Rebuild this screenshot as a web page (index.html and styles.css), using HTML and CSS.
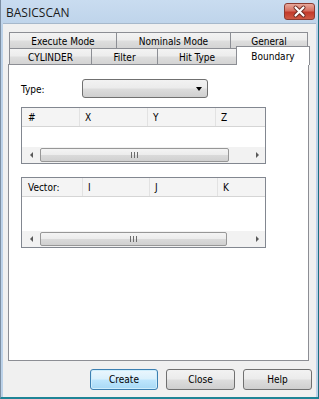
FILE: index.html
```html
<!DOCTYPE html>
<html lang="en">
<head>
    <meta charset="UTF-8">
    <title>BASICSCAN</title>
    <link rel="stylesheet" href="styles.css">
</head>
<body>
<div class="window">
    <div class="titlebar">
        <span class="title">BASICSCAN</span>
        <span class="close">
            <svg width="31" height="17" viewBox="0 0 31 17">
                <path d="M11.5 4.5 L19.5 12.5 M19.5 4.5 L11.5 12.5" stroke="#6b2a22" stroke-width="4" stroke-linecap="round"/>
                <path d="M11.5 4.5 L19.5 12.5 M19.5 4.5 L11.5 12.5" stroke="#ffffff" stroke-width="2.2" stroke-linecap="round"/>
            </svg>
        </span>
    </div>
    <div class="client">
        <div class="tabs">
            <div class="tabrow">
                <div class="tab t-exec">Execute Mode</div>
                <div class="tab t-nom">Nominals Mode</div>
                <div class="tab t-gen">General</div>
            </div>
            <div class="tabrow">
                <div class="tab t-cyl">CYLINDER</div>
                <div class="tab t-fil">Filter</div>
                <div class="tab t-hit">Hit Type</div>
                <div class="tab t-bnd selected">Boundary</div>
            </div>
        </div>
        <div class="panel">
            <div class="type-row">
                <span class="label">Type:</span>
                <div class="combo"><span class="combo-arrow"></span></div>
            </div>

            <div class="grid grid-pts">
                <div class="grid-head">
                    <span class="col c1">#</span>
                    <span class="col c2">X</span>
                    <span class="col c3">Y</span>
                    <span class="col c4">Z</span>
                </div>
                <div class="grid-body"></div>
                <div class="hscroll">
                    <span class="sb-left"><i class="arr-left"></i></span>
                    <div class="sb-track"><div class="thumb"><i class="grip"></i><i class="grip"></i><i class="grip"></i></div></div>
                    <span class="sb-right"><i class="arr-right"></i></span>
                </div>
            </div>

            <div class="grid grid-vec">
                <div class="grid-head">
                    <span class="col c1">Vector:</span>
                    <span class="col c2">I</span>
                    <span class="col c3">J</span>
                    <span class="col c4">K</span>
                </div>
                <div class="grid-body"></div>
                <div class="hscroll">
                    <span class="sb-left"><i class="arr-left"></i></span>
                    <div class="sb-track"><div class="thumb"><i class="grip"></i><i class="grip"></i><i class="grip"></i></div></div>
                    <span class="sb-right"><i class="arr-right"></i></span>
                </div>
            </div>
        </div>
        <div class="buttons">
            <div class="btn default">Create</div>
            <div class="btn">Close</div>
            <div class="btn">Help</div>
        </div>
    </div>
</div>
</body>
</html>
```

FILE: styles.css
```css
* {
    margin: 0;
    padding: 0;
    box-sizing: border-box;
}

body {
    background-color: #bcd3ea;
    font-family: "DejaVu Sans Condensed", "DejaVu Sans", sans-serif;
    font-stretch: condensed;
    font-size: 10px;
    color: #000;
}

.window {
    width: 319px;
    height: 399px;
    display: flex;
    flex-direction: column;
    border-left: 1px solid #7d8fa3;
    border-right: 1px solid #1d6f80;
    border-bottom: 2px solid #1f8496;
    background: linear-gradient(#c9dcf0, #bcd2e9 30px);
}

.titlebar {
    height: 23px;
    display: flex;
    justify-content: space-between;
    align-items: flex-start;
    padding: 0 3px 0 5px;
}

.title {
    font-family: "Open Sans", sans-serif;
    font-stretch: normal;
    font-size: 12px;
    line-height: 12px;
    margin-top: 7px;
    color: #1a1a1a;
}

.close {
    width: 31px;
    height: 17px;
    margin-top: 3px;
    border: 1px solid #8b3b31;
    border-radius: 3px;
    background: linear-gradient(#e8a99c, #d66f60 45%, #c23a2b 55%, #cf5a45);
    display: flex;
}

.close svg {
    margin: -1px;
}

.client {
    flex: 1;
    margin: 0 2px;
    background-color: #f0f0f0;
    border-top: 1px solid #a6b8cb;
    padding: 8px 7px 0 5px;
    display: flex;
    flex-direction: column;
}

.tabs {
    margin-left: 1px;
}

.tabrow {
    display: flex;
    height: 16px;
}

.tab {
    height: 16px;
    margin-right: -1px;
    border: 1px solid #8c8e94;
    border-bottom: none;
    background: linear-gradient(#f3f3f3, #ececec 48%, #dedede 52%, #d4d4d4);
    text-align: center;
    padding-top: 2px;
    line-height: 13px;
}

.t-exec { width: 108px; }
.t-nom { width: 115px; }
.t-gen { width: 78px; }
.t-cyl { width: 83px; }
.t-fil { width: 67px; }
.t-hit { width: 80px; }
.t-bnd { width: 74px; }

.tab.selected {
    height: 19px;
    margin-top: -2px;
    background: #fff;
    position: relative;
    z-index: 1;
    padding-top: 3px;
}

.panel {
    height: 297px;
    background-color: #fff;
    border: 1px solid #8c8e94;
    padding: 14px 0 0 12px;
}

.type-row {
    display: flex;
    align-items: center;
    height: 19px;
}

.label {
    width: 61px;
    padding-top: 1px;
}

.combo {
    width: 126px;
    height: 19px;
    border: 1px solid #707070;
    border-radius: 3px;
    background: linear-gradient(#f2f2f2, #ebebeb 48%, #dddddd 52%, #cfcfcf);
    position: relative;
}

.combo-arrow {
    position: absolute;
    right: 5px;
    top: 7px;
    border-left: 3.5px solid transparent;
    border-right: 3.5px solid transparent;
    border-top: 4px solid #000;
}

.grid {
    width: 245px;
    border: 1px solid #828790;
    display: flex;
    flex-direction: column;
}

.grid-pts {
    height: 57px;
    margin-top: 9px;
}

.grid-vec {
    height: 71px;
    margin-top: 13px;
}

.grid-head {
    display: flex;
    height: 19px;
    background-color: #f4f4f4;
    border-bottom: 1px solid #d5d5d5;
}

.col {
    border-right: 1px solid #e2e2e2;
    padding: 2px 0 0 5px;
    line-height: 16px;
}

.col.c4 {
    flex: 1;
    border-right: none;
}

.grid-pts .c1 { width: 58px; padding-left: 6px; }
.grid-pts .c2 { width: 68px; }
.grid-pts .c3 { width: 68px; }

.grid-vec .c1 { width: 61px; padding-left: 6px; }
.grid-vec .c2 { width: 67px; }
.grid-vec .c3 { width: 68px; }

.grid-body {
    flex: 1;
}

.hscroll {
    height: 16px;
    display: flex;
    background-color: #f2f2f2;
}

.sb-left {
    width: 18px;
    display: flex;
    align-items: center;
    justify-content: center;
}

.sb-right {
    width: 16px;
    display: flex;
    align-items: center;
    justify-content: center;
}

.arr-left {
    border-top: 3px solid transparent;
    border-bottom: 3px solid transparent;
    border-right: 3px solid #5a5a5a;
}

.arr-right {
    border-top: 3px solid transparent;
    border-bottom: 3px solid transparent;
    border-left: 3px solid #5a5a5a;
}

.sb-track {
    flex: 1;
    padding: 1px 0;
}

.thumb {
    width: 189px;
    height: 14px;
    border: 1px solid #979797;
    border-radius: 2px;
    background: linear-gradient(#f4f4f4, #ececec 48%, #dadada 52%, #d0d0d0);
    display: flex;
    justify-content: center;
    align-items: center;
    gap: 2px;
}

.grid-vec .thumb {
    width: 187px;
}

.grip {
    width: 1px;
    height: 6px;
    background-color: #6c6c6c;
}

.buttons {
    display: flex;
    justify-content: flex-end;
    gap: 8px;
    margin: 8px -3px 0 0;
}

.btn {
    width: 69px;
    height: 21px;
    border: 1px solid #707070;
    border-radius: 3px;
    background: linear-gradient(#f2f2f2, #ebebeb 48%, #dddddd 52%, #cfcfcf);
    text-align: center;
    line-height: 19px;
}

.btn.default {
    width: 68px;
    border-color: #3c7fb1;
    background: linear-gradient(#eaf6fd, #d9f0fc 48%, #bee6fd 52%, #a7d9f5);
    box-shadow: inset 0 0 0 1px #cfeefc;
}
```
